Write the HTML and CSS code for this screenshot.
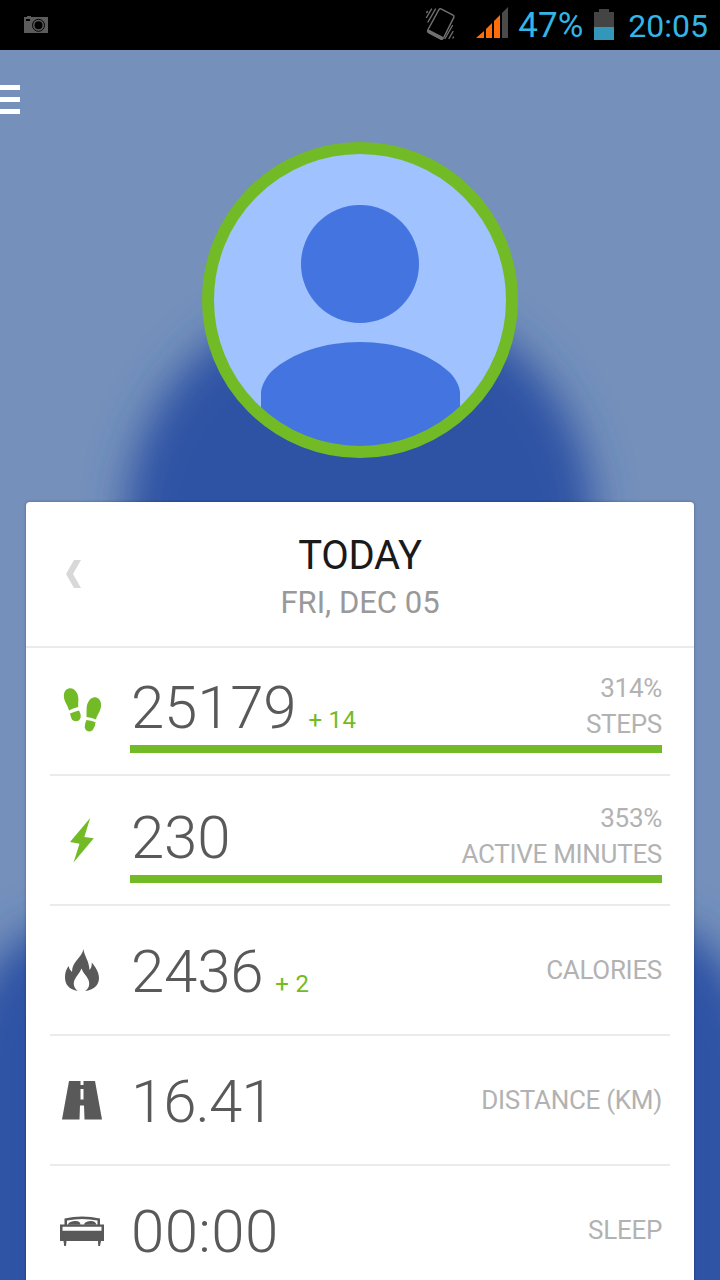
FILE: index.html
```html
<!DOCTYPE html>
<html lang="en">
<head>
    <meta charset="UTF-8">
    <meta name="viewport" content="width=device-width, initial-scale=1.0">
    <title>Activity - Today</title>
    <link rel="stylesheet" href="styles.css">
</head>
<body>
    <header class="status-bar">
        <svg class="camera-icon" width="26" height="20" viewBox="0 0 26 20">
            <path fill="#5c5c5c" d="M1 2h3V1h4v1h17v16H1z"/>
            <rect x="3" y="4" width="4" height="2" fill="#000"/>
            <circle cx="15.500" cy="10.300" r="6" fill="#5c5c5c" stroke="#000" stroke-width="1"/>
            <circle cx="15.500" cy="10.300" r="4" fill="#000"/>
        </svg>
        <div class="status-right">
            <svg class="vibrate-icon" width="32" height="36" viewBox="0 0 32 36">
                <g fill="none" stroke="#707070" stroke-linecap="round" stroke-linejoin="round">
                    <path stroke-width="1.500" d="M14 2.500q1-1.200 2.500-.4l11.500 6q1.500.8.800 2.200L18.500 31q-1 1.800-2.600 1L3.500 25.500q-1.500-1-.7-2.500z"/>
                    <path stroke-width="3.500" d="M4 24.500l12.500 6.500"/>
                    <path stroke-width="1.400" d="M10.500 2L3 15M6.500 2L1.500 10.500M2.500 4.500l-.8 1M27.500 18.500L20 31.500M28 24.500l-4 7M28.500 30l-.6 1"/>
                </g>
            </svg>
            <svg class="signal-icon" width="33" height="32" viewBox="0 0 33 32">
                <path fill="#ff6d0a" d="M0 31l8-7v7zM10 22l6-6v15h-6zM18 14l6-6v23h-6z"/>
                <path fill="#4a4a4a" d="M26 6l6-6v31h-6z"/>
            </svg>
            <span class="battery-level">47%</span>
            <svg class="battery-icon" width="20" height="32" viewBox="0 0 20 32">
                <path fill="#444" d="M0 3h5V0h10v3h5v16H0z"/>
                <path fill="#3397ba" d="M0 18h20v13H0z"/>
            </svg>
            <span class="clock">20:05</span>
        </div>
    </header>

    <main class="dashboard">
        <!-- blurred enlargement of the profile picture -->
        <svg class="backdrop" width="720" height="1230" viewBox="0 50 720 1230">
            <defs>
                <filter id="soft" filterUnits="userSpaceOnUse" x="-200" y="0" width="1120" height="1500">
                    <feGaussianBlur stdDeviation="20"/>
                </filter>
            </defs>
            <g fill="#2f53a4" filter="url(#soft)">
                <circle cx="360" cy="525" r="234"/>
                <path d="M-40 1500V1060Q-40 1005 12 945Q140 860 360 860T708 945Q760 1005 760 1060V1500z"/>
            </g>
        </svg>

        <div class="menu-btn"><i></i><i></i><i></i></div>

        <svg class="avatar" width="316" height="316" viewBox="0 0 316 316">
            <clipPath id="face"><circle cx="158" cy="158" r="147"/></clipPath>
            <g clip-path="url(#face)">
                <rect width="316" height="316" fill="#a0c2ff"/>
                <circle cx="158" cy="122" r="59" fill="#4374e0"/>
                <path fill="#4374e0" d="M59 316V250C60 243 64 235 70 229C90 211 122 200 158 200S226 211 246 229C253 235 257 243 258 250V316z"/>
            </g>
            <circle cx="158" cy="158" r="152" fill="none" stroke="#72bb26" stroke-width="12"/>
        </svg>

        <section class="card">
            <div class="day">
                <svg class="prev" width="16" height="28" viewBox="0 0 16 28">
                    <path fill="#d8d8d8" d="M8 0h7L7 14l8 14H8L0 14z"/>
                </svg>
                <h1>TODAY</h1>
                <p>FRI, DEC 05</p>
            </div>

            <div class="row">
                <div class="icon">
                    <svg width="48" height="48" viewBox="0 1 48 48" fill="#72bb26">
                        <path d="M6 8C7 1.500 14.500 0 18 5.500C21.500 10.500 20 14 20.200 21Q15 22 11 24.500C9.500 18 5 15 6 8z"/>
                        <path d="M12 27.500Q17 25.500 21 24.500Q24 30 22 33C20 36.500 14.500 35.500 13.500 32.500Q12.500 30 12 27.500z"/>
                        <path d="M42.900 17C42 11 35.500 9 31.500 14C27.500 19.500 29 23 28.500 31Q34 31.500 38 33.500C39.500 27.500 44 24 42.900 17z"/>
                        <path d="M28.400 34Q33 34.300 37.500 36.200Q37.500 40 35 43.500C32.500 47 27.500 45.500 26.800 41.500Q26.600 38 28.400 34z"/>
                    </svg>
                </div>
                <div class="content">
                    <div class="stat">
                        <div class="value">25179<span>+ 14</span></div>
                        <div class="label">314%<br>STEPS</div>
                    </div>
                    <div class="bar"></div>
                </div>
            </div>

            <div class="row">
                <div class="icon">
                    <svg width="48" height="48" viewBox="0 0 48 48" fill="#72bb26">
                        <path d="M32.200 2L12 26l9.500 1.800L15.500 46.500L35.800 22.200l-9.500-1.200z"/>
                    </svg>
                </div>
                <div class="content">
                    <div class="stat">
                        <div class="value">230</div>
                        <div class="label">353%<br>ACTIVE MINUTES</div>
                    </div>
                    <div class="bar"></div>
                </div>
            </div>

            <div class="row simple">
                <div class="icon">
                    <svg width="48" height="48" viewBox="0 0 48 48" fill="#595959">
                        <path d="M25.500 3C26 10 31 14 31.500 24Q34 21.500 33.800 16.500C37 20.500 41 26 41 32C41 39 36 44 27 45C31 42.500 32.500 38 30 33C28 29 25 27 23.500 22.500C22 27 18.500 29.500 16.500 34C14.500 39 17 43 20 45C11 43.500 7 38.500 7 31.500C7 27 8 23.500 10.500 20Q11 23.500 14 26C14 15 24 12 25.500 3z"/>
                    </svg>
                </div>
                <div class="content">
                    <div class="stat">
                        <div class="value">2436<span>+ 2</span></div>
                        <div class="label">CALORIES</div>
                    </div>
                </div>
            </div>

            <div class="row simple">
                <div class="icon">
                    <svg width="48" height="48" viewBox="0 0 48 48" fill="#595959">
                        <path fill-rule="evenodd" d="M11 5h11.500v4h3V5H37l7 38.500H26.500l-.5-14h-4l-.5 14H4zM22.500 13v10.500h3V13z"/>
                    </svg>
                </div>
                <div class="content">
                    <div class="stat">
                        <div class="value distance">16.41</div>
                        <div class="label">DISTANCE (KM)</div>
                    </div>
                </div>
            </div>

            <div class="row simple">
                <div class="icon">
                    <svg width="48" height="48" viewBox="0 0 48 48" fill="#595959">
                        <path d="M6.500 19V12.500Q24 8.500 42 12.500V19H39.500V14.500Q24 11.500 9 14.500V19z"/>
                        <path d="M10 18.800Q10.500 15.500 16.500 15T22.500 18.800zM26 18.800Q26.500 15.500 32 15T38.500 18.800z"/>
                        <path fill-rule="evenodd" d="M2 18.500H46V35H2zM4.500 20.700V24.800H43.500V20.700z"/>
                        <path d="M5.500 35h3L8 40H6.200zM40 35h3L42 40h-1.800z"/>
                    </svg>
                </div>
                <div class="content">
                    <div class="stat">
                        <div class="value time">00:00</div>
                        <div class="label">SLEEP</div>
                    </div>
                </div>
            </div>
        </section>
    </main>
</body>
</html>
```
FILE: styles.css
```css
* {
    box-sizing: border-box;
}

body {
    margin: 0;
    width: 720px;
    height: 1280px;
    overflow: hidden;
    font-family: Roboto, 'Liberation Sans', sans-serif;
}

svg {
    display: block;
}

.status-bar {
    height: 50px;
    padding: 0 12px 0 23px;
    background: #000;
    color: #33b5e5;
    display: flex;
    justify-content: space-between;
    align-items: center;
}

.status-right {
    display: flex;
    align-items: center;
}

.vibrate-icon {
    margin-right: 19px;
}

.signal-icon {
    margin: 0 9px 4px 0;
}

.battery-level {
    width: 76px;
    padding-top: 2px;
    font-size: 35px;
    line-height: 48px;
}

.clock {
    margin-left: 14px;
    padding-top: 2px;
    font-size: 32px;
    line-height: 48px;
}

.dashboard {
    position: relative;
    height: 1230px;
    padding: 92px 26px 0;
    background: #7490bb;
    overflow: hidden;
}

.backdrop {
    position: absolute;
    top: 0;
    left: 0;
}

.menu-btn {
    position: absolute;
    top: 35px;
    left: 0;
    width: 20px;
    display: grid;
    gap: 7px;
}

.menu-btn i {
    height: 5px;
    background: #fff;
}

.avatar {
    position: relative;
    margin: 0 auto 44px;
}

.card {
    position: relative;
    height: 800px;
    background: #fff;
    border-radius: 4px 4px 0 0;
    box-shadow: 0 0 3px rgba(0, 0, 0, 0.3);
}

.day {
    position: relative;
    height: 146px;
    padding-top: 30px;
    border-bottom: 2px solid #ebebeb;
    text-align: center;
}

.day h1 {
    margin: 0;
    font-size: 40px;
    font-weight: 400;
    line-height: 48px;
    letter-spacing: -0.3px;
    color: #1a1a1a;
}

.day p {
    margin: 0;
    font-size: 31px;
    line-height: 46px;
    color: #999;
}

.prev {
    position: absolute;
    left: 40px;
    top: 58px;
}

.row {
    height: 130px;
    margin: 0 24px;
    border-bottom: 2px solid #ebebeb;
    display: grid;
    grid-template-columns: 64px 1fr;
    align-items: center;
}

.day + .row {
    height: 128px;
}

.icon {
    display: flex;
    justify-content: center;
}

.content {
    align-self: end;
    padding: 0 8px 21px 16px;
}

.simple .content {
    align-self: center;
    padding-bottom: 0;
}

.stat {
    height: 72px;
    display: flex;
    justify-content: space-between;
    align-items: center;
}

.value {
    display: flex;
    align-items: baseline;
    gap: 12px;
    padding: 3px 0 0 1px;
    font-size: 60px;
    font-weight: 300;
    line-height: 60px;
    letter-spacing: -0.2px;
    color: #595959;
}

.value span {
    font-size: 24px;
    font-weight: 400;
    line-height: 28px;
    letter-spacing: 0.3px;
    color: #72bb26;
}

.distance {
    letter-spacing: -1px;
}

.time {
    letter-spacing: 0.4px;
}

.simple .value {
    padding-top: 4px;
}

.label {
    font-size: 26px;
    line-height: 36px;
    letter-spacing: -0.3px;
    color: #b2b2b2;
    text-align: right;
}

.bar {
    height: 8px;
    margin-top: 3px;
    background: #72bb26;
}
```
